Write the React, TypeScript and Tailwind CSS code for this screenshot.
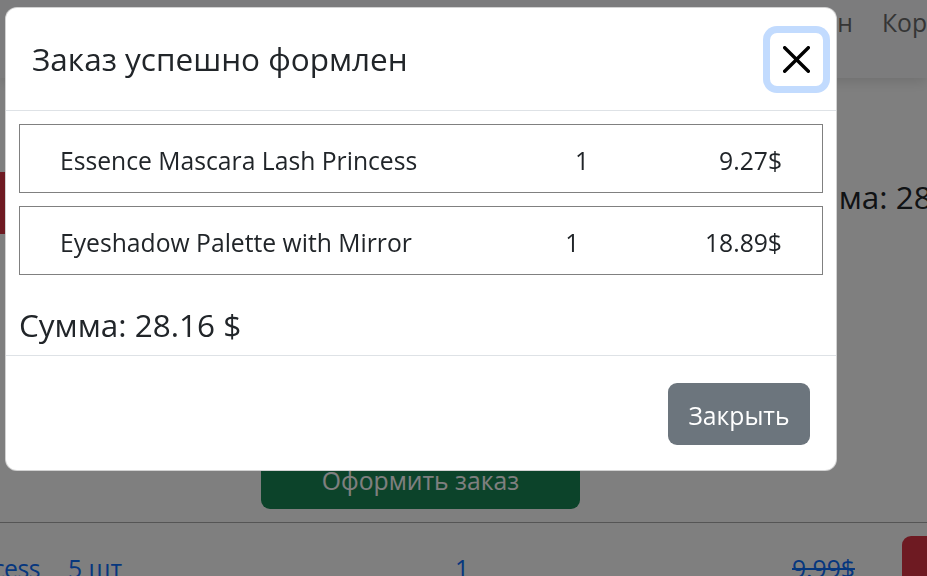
import { useState } from 'react';

type OrderItem = {
  title: string;
  qty: number;
  price: string;
};

const items: OrderItem[] = [
  { title: 'Essence Mascara Lash Princess', qty: 1, price: '9.27$' },
  { title: 'Eyeshadow Palette with Mirror', qty: 1, price: '18.89$' },
];

const font = { fontFamily: '"Open Sans", "Noto Sans", sans-serif' };

function CloseIcon() {
  return (
    <svg viewBox="0 0 16 16" className="h-[27px] w-[27px]" fill="currentColor">
      <path d="M.293.293a1 1 0 0 1 1.414 0L8 6.586 14.293.293a1 1 0 1 1 1.414 1.414L9.414 8l6.293 6.293a1 1 0 0 1-1.414 1.414L8 9.414l-6.293 6.293a1 1 0 0 1-1.414-1.414L6.586 8 .293 1.707a1 1 0 0 1 0-1.414z" />
    </svg>
  );
}

// the cart page that sits behind the modal
function CartPage() {
  return (
    <div className="min-h-screen bg-white text-[24.7px] text-[#212529]">
      <nav className="relative z-10 h-[78px] bg-[#f8f9fa] shadow-[0_4px_12px_rgba(0,0,0,0.12)]">
        <div className="flex whitespace-nowrap pt-[4px] text-[#6b6b6b]">
          <div className="flex w-[853px] shrink-0 justify-end">Магазин</div>
          <span className="ml-[29px]">Корзина</span>
        </div>
      </nav>

      <section className="flex items-start pt-[94px]">
        <div className="h-[62px] w-[5px] shrink-0 bg-[#dc3545]" />
        <div className="ml-[775px] mt-[6px] whitespace-nowrap text-[31.5px] leading-[1.2]">Сумма: 28.16 $</div>
      </section>

      <div className="ml-[261px] mt-[206px] flex h-[69px] w-[319px] items-center justify-center rounded-[9px] bg-[#198754] pt-[12px] text-white">
        Оформить заказ
      </div>

      <div className="mt-[13px] border-t border-[#aaaaaa]" />

      <div className="flex items-start whitespace-nowrap pt-[13px] text-[#0d6efd]">
        <div className="mt-[14px] flex w-[40px] shrink-0 justify-end overflow-hidden tracking-[-0.5px]">Essence Mascara Lash Princess</div>
        <div className="ml-[28px] mt-[14px] w-[387px] shrink-0">5 шт</div>
        <div className="mt-[14px] w-[337px] shrink-0">1</div>
        <div className="mt-[14px] w-[110px] shrink-0 line-through">9.99$</div>
        <div className="h-[62px] w-[60px] shrink-0 rounded-l-[9px] bg-[#dc3545]" />
      </div>
    </div>
  );
}

function OrderModal({ onClose }: { onClose: () => void }) {
  return (
    <div className="fixed inset-0 z-50 overflow-hidden bg-black/50">
      <div className="ml-[5px] mt-[7px] w-[832px] overflow-hidden rounded-[12px] border border-black/[0.175] bg-white text-[#212529]" style={font}>
        <div className="flex h-[103px] items-center justify-between border-b border-[#dee2e6] pl-[26px] pr-[13px]">
          <h5 className="text-[31.5px] leading-[1.2]">Заказ успешно формлен</h5>
          <button
            onClick={onClose}
            className="flex h-[53px] w-[53px] items-center justify-center rounded-[7px] text-black shadow-[0_0_0_7px_#c2dbfe]"
          >
            <CloseIcon />
          </button>
        </div>

        <div className="px-[13px] pb-[11px] pt-[13px]">
          <div className="flex flex-col gap-[13px] text-[24.7px]">
            {items.map((it) => (
              <div key={it.title} className="flex h-[69px] items-center border border-[#808080] pl-[40px] pr-[40px] pt-[4px]">
                <span>{it.title}</span>
                <span className="flex-1 pl-[28px] text-center">{it.qty}</span>
                <span>{it.price}</span>
              </div>
            ))}
          </div>
          <div className="mt-[31px] text-[31.5px] leading-[1.2]">Сумма: 28.16 $</div>
        </div>

        <div className="flex justify-end border-t border-[#dee2e6] pb-[25px] pr-[26px] pt-[27px]">
          <button
            onClick={onClose}
            className="flex h-[62px] w-[142px] items-center justify-center rounded-[9px] bg-[#6c757d] pt-[3px] text-[24.7px] text-white"
          >
            Закрыть
          </button>
        </div>
      </div>
    </div>
  );
}

export default function App() {
  const [open, setOpen] = useState(true);

  return (
    <div className="h-screen overflow-hidden" style={font}>
      <CartPage />
      {open && <OrderModal onClose={() => setOpen(false)} />}
    </div>
  );
}
